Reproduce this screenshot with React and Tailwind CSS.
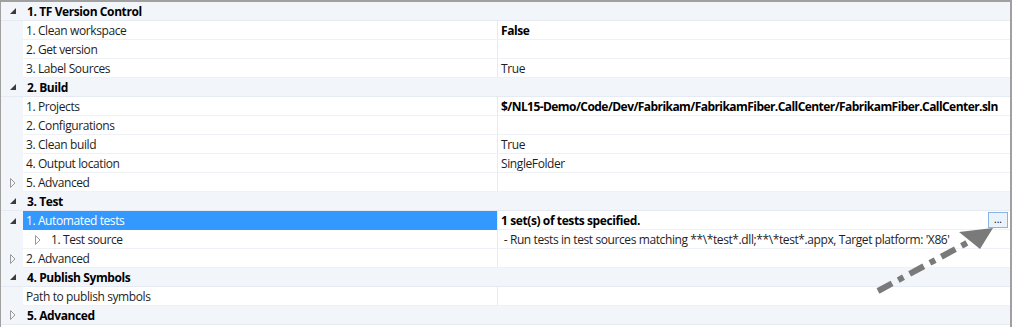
import React from "react";

const Expanded = () => (
  <svg width="6" height="6" viewBox="0 0 6 6" className="block">
    <polygon points="6,0 6,6 0,6" fill="#3c3c3c" />
  </svg>
);

const Collapsed = () => (
  <svg width="6" height="10" viewBox="0 0 6 10" className="block">
    <polygon points="0.5,0.5 5,5 0.5,9.5" fill="none" stroke="#9a9a9a" strokeWidth="1" />
  </svg>
);

const Header = ({ label, open = true }) => (
  <div className="flex h-[19px] items-center bg-[#f2f5fa] border-b border-[#e6ebf3]">
    <div className="w-[22px] flex justify-center pl-[1px]">{open ? <Expanded /> : <Collapsed />}</div>
    <div className="pl-[4px] pt-[1px] font-bold text-black">{label}</div>
  </div>
);

const Row = ({ label, value, bold, tight, icon, selected, indent, children }) => (
  <div className="flex h-[19px] items-stretch">
    <div className="w-[22px] flex items-center justify-center bg-[#f2f5fa] pl-[1px]">{icon}</div>
    <div
      className={
        "w-[475px] flex items-center pt-[1px] border-r border-[#e6ebf3] " +
        (selected ? "bg-[#3399ff] text-white" : "bg-white border-b border-b-[#eef1f6]")
      }
    >
      {indent && (
        <div className="w-[25px] flex justify-end pr-[7px]">
          <Collapsed />
        </div>
      )}
      <span className="pl-[3px]">{label}</span>
    </div>
    <div className="flex-1 flex items-center pt-[1px] bg-white border-b border-[#eef1f6] pl-[3px] relative">
      <span className={(bold ? "font-bold text-black " : "") + (tight ? "tracking-[-0.56px]" : "")}>{value}</span>
      {children}
    </div>
  </div>
);

export default function App() {
  return (
    <div
      className="relative w-[1012px] h-[327px] overflow-hidden bg-white border-l border-t-2 border-r-2 border-[#a0a0a0] text-[12px] leading-none tracking-[-0.4px] whitespace-nowrap text-[#1e1e1e]"
      style={{ fontFamily: '"Open Sans", "Noto Sans", sans-serif' }}
    >
      <Header label="1. TF Version Control" />
      <Row label="1. Clean workspace" value="False" bold />
      <Row label="2. Get version" value="" />
      <Row label="3. Label Sources" value="True" />
      <Header label="2. Build" />
      <Row
        label="1. Projects"
        value="$/NL15-Demo/Code/Dev/Fabrikam/FabrikamFiber.CallCenter/FabrikamFiber.CallCenter.sln"
        bold
        tight
      />
      <Row label="2. Configurations" value="" />
      <Row label="3. Clean build" value="True" />
      <Row label="4. Output location" value="SingleFolder" />
      <Row label="5. Advanced" value="" icon={<Collapsed />} />
      <Header label="3. Test" />
      <Row label="1. Automated tests" value="1 set(s) of tests specified." bold selected icon={<Expanded />}>
        <div className="absolute right-[2px] top-[1px] w-[20px] h-[16px] border border-[#86b4e6] bg-[#eaf2fb] flex items-end justify-center pb-[3px] text-[10px] tracking-normal text-black">
          ...
        </div>
      </Row>
      <Row
        label="1. Test source"
        indent
        value={"\u00a0- Run tests in test sources matching **\\*test*.dll;**\\*test*.appx, Target platform: 'X86'"}
      />
      <Row label="2. Advanced" value="" icon={<Collapsed />} />
      <Header label="4. Publish Symbols" />
      <Row label="Path to publish symbols" value="" />
      <Header label="5. Advanced" open={false} />

      <svg className="absolute left-0 top-0 pointer-events-none" width="1012" height="327">
        <line
          x1="877"
          y1="289"
          x2="975"
          y2="236"
          stroke="#7a7a7a"
          strokeWidth="6"
          strokeDasharray="16 7 6 7"
        />
        <polygon points="992,226 958,230 979,247" fill="#7a7a7a" />
      </svg>
    </div>
  );
}
